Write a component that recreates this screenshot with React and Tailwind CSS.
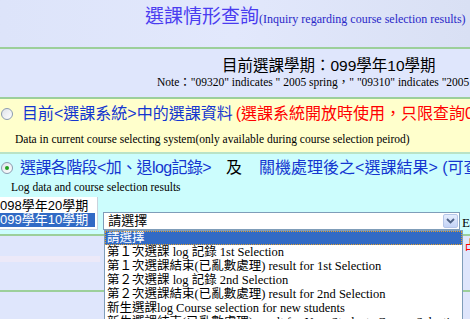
import React from 'react';

const serif = { fontFamily: '"Liberation Serif", "Noto Sans CJK TC", serif' };
const sans = { fontFamily: '"Liberation Sans", "Noto Sans CJK TC", sans-serif' };

const options = [
    '請選擇',
    '第１次選課 log 記錄 1st Selection',
    '第１次選課結束(已亂數處理) result for 1st Selection',
    '第２次選課 log 記錄 2nd Selection',
    '第２次選課結束(已亂數處理) result for 2nd Selection',
    '新生選課log Course selection for new students',
    '新生選課結束(已亂數處理) result for New Students Course Selection',
];

const Radio = ({ checked }) => (
    <span className="w-[12px] h-[12px] rounded-full border border-[#8b9bb0] bg-gradient-to-br from-[#dfe3ea] to-white flex items-center justify-center shrink-0">
        {checked && <span className="w-[4px] h-[4px] rounded-full bg-[#21a121]" />}
    </span>
);

const GreenLine = () => <div className="h-[2px] bg-[#9ccf9a]" />;

export default function App() {
    return (
        <div className="relative w-[470px] h-[319px] overflow-hidden bg-[#dfe6fc]" style={sans}>
            {/* header */}
            <div className="h-[47px] pl-[145px] pt-[6px] whitespace-nowrap bg-gradient-to-r from-[#dde4fa] via-[#e2e8fc] to-[#d9e0f4]">
                <span className="text-[19px] leading-[22px] text-[#4a3cf0]">選課情形查詢</span>
                <span className="text-[12px] text-[#2a28c8]" style={serif}>(Inquiry regarding course selection results)</span>
            </div>
            <GreenLine />
            <div className="h-[48px] overflow-hidden whitespace-nowrap">
                <div className="pl-[222px] pt-[7px] text-[15.5px] leading-[20px] text-black">目前選課學期：099學年10學期</div>
                <div className="pl-[157px] text-[11.5px] leading-[13px] text-black" style={serif}>
                    Note："09320" indicates " 2005 spring，" "09310" indicates "2005 fall"
                </div>
            </div>
            <GreenLine />

            {/* current system */}
            <div className="h-[53px] bg-[#ffffcc] whitespace-nowrap overflow-hidden">
                <div className="flex items-center h-[28px] pl-[1px] pt-[2px]">
                    <Radio />
                    <span className="ml-[9px] text-[16px] text-[#1436d0]">目前&lt;選課系統&gt;中的選課資料</span>
                    <span className="ml-[3px] text-[16px] text-[#ff0000]">(選課系統開放時使用，只限查詢099學年10學期)</span>
                </div>
                <div className="pl-[15px] pt-[5px] text-[11.5px] leading-[14px] text-black" style={serif}>
                    Data in current course selecting system(only available during course selection peirod)
                </div>
            </div>
            <div className="h-[2px] bg-[#b9e3c6]" />

            {/* log section */}
            <div className="h-[80px] bg-[#ccfdfd] whitespace-nowrap overflow-hidden">
                <div className="flex items-center h-[26px] pl-[1px] pt-[1px]">
                    <Radio checked />
                    <span className="ml-[7px] text-[16px] tracking-[-0.6px] text-[#1436d0]">選課各階段&lt;加、退log記錄&gt;</span>
                    <span className="ml-[15px] text-[16px] text-black">及</span>
                    <span className="ml-[17px] text-[16px] text-[#1436d0]">關機處理後之&lt;選課結果&gt; (可查詢)</span>
                </div>
                <div className="pl-[11px] text-[11.5px] leading-[14px] text-black" style={serif}>Log data and course selection results</div>
                <div className="flex items-start mt-[3px]">
                    <div className="w-[99px] h-[33px] bg-white border-r border-b border-[#c9d3dd] pt-[2px] text-[13px] leading-[14px] whitespace-nowrap">
                        <div className="h-[14px] text-black">098學年20學期</div>
                        <div className="h-[14px] mr-[2px] bg-[#316ac5] text-white">099學年10學期</div>
                    </div>
                    <div className="ml-[5px] mt-[15px] w-[359px] h-[18px] bg-white border border-[#7f9db9] flex items-center">
                        <span className="pl-[4px] text-[13px] flex-1">請選擇</span>
                        <span className="w-[15px] h-[14px] mr-[1px] rounded-[2px] border border-[#b5c6e8] bg-gradient-to-b from-[#e5edfd] to-[#c3d3f6] flex items-center justify-center">
                            <svg width="9" height="6" viewBox="0 0 9 6"><path d="M1 1 L4.5 4.5 L8 1" fill="none" stroke="#4d6185" strokeWidth="1.8" /></svg>
                        </span>
                    </div>
                    <span className="ml-[2px] mt-[16px] text-[13px] text-black" style={serif}>E</span>
                </div>
            </div>
            <GreenLine />
            <div className="h-[54px] relative">
                <div className="pl-[464px] pt-[2px] text-[13px] leading-[14px] text-[#ff0000]">占</div>
                <div className="absolute left-[130px] top-[16px] w-[80px] h-[5px] bg-[#eef0fb]" />
                <div className="absolute left-0 top-[20px] w-[100px] h-[6px] bg-[#ece9f8]" />
            </div>
            <GreenLine />

            {/* open dropdown */}
            <div className="absolute left-[104px] top-[230px] w-[359px] h-[100px] bg-white border border-[#7f9db9] text-[12.5px] leading-[14px] text-black whitespace-nowrap overflow-hidden" style={serif}>
                {options.map((o, i) => (
                    <div
                        key={i}
                        className={i === 0 ? 'h-[14px] px-[2px] bg-[#316ac5] text-white outline-1 outline-dotted outline-[#e0a030] -outline-offset-1' : 'h-[14px] px-[2px]'}
                    >
                        {o}
                    </div>
                ))}
            </div>
        </div>
    );
}
